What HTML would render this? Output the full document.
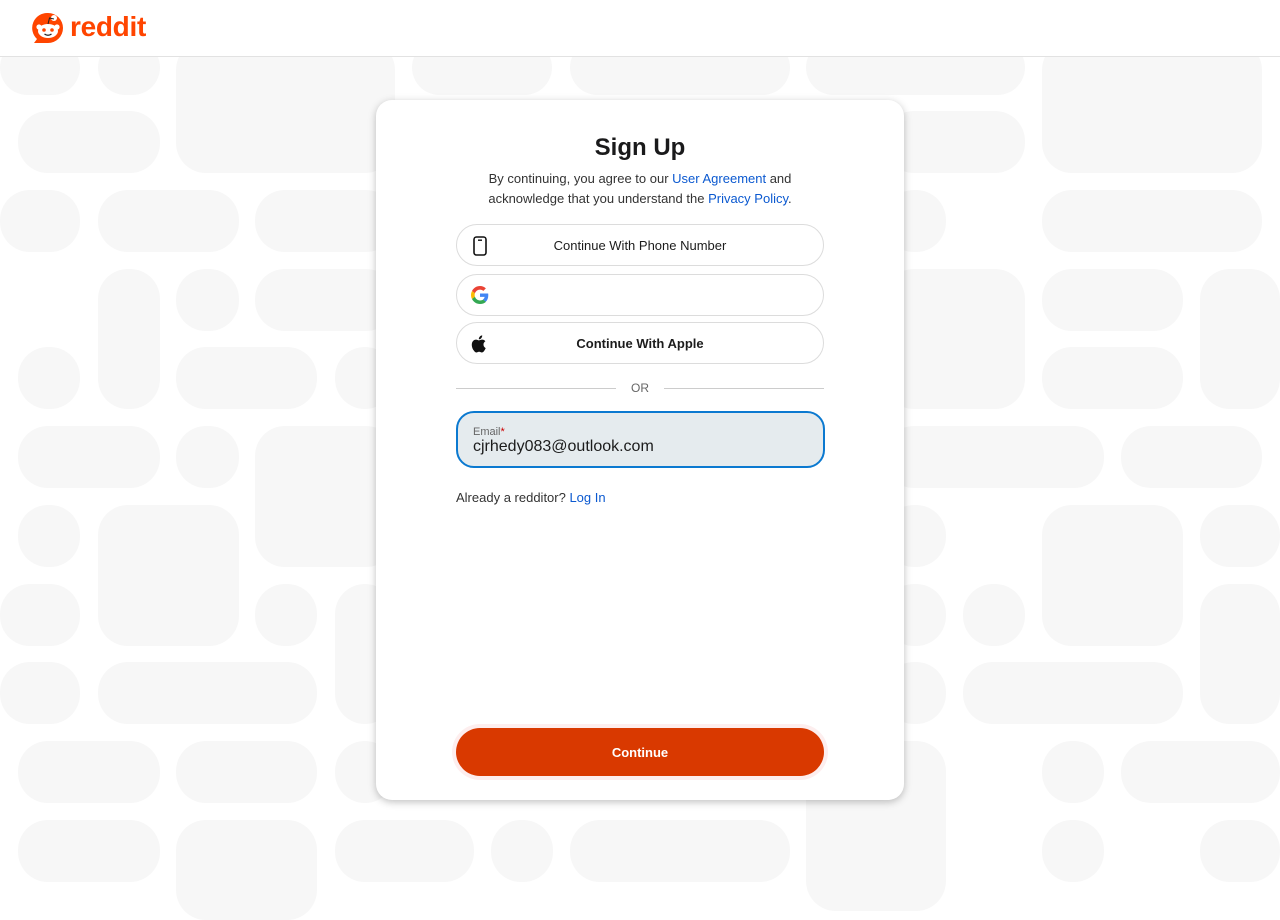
<!DOCTYPE html>
<html><head><meta charset="utf-8"><style>
*{box-sizing:border-box;margin:0;padding:0}
body{width:1280px;height:900px;overflow:hidden;background:#fff;font-family:"Liberation Sans",sans-serif;position:relative;color:#1c1c1c}
.hdr{position:absolute;left:0;top:0;width:1280px;height:57px;background:#fff;border-bottom:1px solid #e2e2e2;z-index:2}
.b{position:absolute;background:#f7f7f7;border-radius:30px}
.card{position:absolute;left:376px;top:100px;width:528px;height:700px;background:#fff;border-radius:16px;box-shadow:0 2px 8px rgba(0,0,0,.25);z-index:3}
h1{position:absolute;top:34px;width:100%;text-align:center;font-size:24px;font-weight:bold;color:#1a1a1b}
.sub{position:absolute;top:69px;width:100%;text-align:center;font-size:13px;line-height:20px;color:#333}
a{color:#0b59d0;text-decoration:none}
.btn{position:absolute;left:80px;width:368px;height:42px;border:1px solid #dcdcdc;border-radius:21px;font-size:13px;display:flex;align-items:center;justify-content:center}
.btn svg{position:absolute;left:14px;top:11px}
.or{position:absolute;top:281px;left:80px;width:368px;height:14px;font-size:12px;color:#666;text-align:center}
.or:before,.or:after{content:"";position:absolute;top:7px;width:160px;height:1px;background:#ccc}
.or:before{left:0}.or:after{right:0}
.inp{position:absolute;left:80px;top:311px;width:369px;height:57px;background:#e5ebee;border:2px solid #0b79d0;border-radius:18px;padding:13px 0 0 15px}
.inp .l{font-size:11px;color:#666}
.inp .v{font-size:16px;color:#1c1c1c;margin-top:0}
.al{position:absolute;left:80px;top:390px;font-size:13px;color:#333}
.cont{position:absolute;left:80px;top:628px;width:368px;height:48px;background:#d93900;border-radius:24px;color:#fff;font-weight:bold;font-size:13px;display:flex;align-items:center;justify-content:center;box-shadow:0 0 0 4px #fdeeee}
</style></head><body>
<div class="hdr">
<svg style="position:absolute;left:32px;top:12px" width="32" height="33" viewBox="0 0 32 33"><path d="M16 1a15 15 0 1 1 0 30H2l3-4A15 15 0 0 1 16 1z" fill="#ff4500"/><ellipse cx="16" cy="19" rx="10" ry="7" fill="#fff"/><circle cx="7" cy="15" r="2.6" fill="#fff"/><circle cx="25" cy="15" r="2.6" fill="#fff"/><circle cx="22" cy="6" r="3" fill="#fff"/><path d="M16 12l1.5-6 4.5 1" stroke="#222" stroke-width="1" fill="none"/><circle cx="12" cy="18" r="1.8" fill="#ff4500"/><circle cx="20" cy="18" r="1.8" fill="#ff4500"/><path d="M12.5 22q3.5 2.5 7 0" stroke="#222" stroke-width="1.3" fill="none"/></svg>
<div style="position:absolute;left:70px;top:11px;font-size:28px;font-weight:bold;color:#ff4500;letter-spacing:-0.3px;line-height:32px">reddit</div>
</div>
<div class="b" style="left:0;top:40px;width:80px;height:55px"></div>
<div class="b" style="left:98px;top:40px;width:62px;height:55px"></div>
<div class="b" style="left:176px;top:40px;width:219px;height:133px"></div>
<div class="b" style="left:412px;top:40px;width:140px;height:55px"></div>
<div class="b" style="left:570px;top:40px;width:220px;height:55px"></div>
<div class="b" style="left:806px;top:40px;width:219px;height:55px"></div>
<div class="b" style="left:1042px;top:40px;width:220px;height:133px"></div>
<div class="b" style="left:18px;top:111px;width:142px;height:62px"></div>
<div class="b" style="left:884px;top:111px;width:141px;height:62px"></div>
<div class="b" style="left:0;top:190px;width:80px;height:62px"></div>
<div class="b" style="left:98px;top:190px;width:141px;height:62px"></div>
<div class="b" style="left:255px;top:190px;width:141px;height:62px"></div>
<div class="b" style="left:884px;top:190px;width:62px;height:62px"></div>
<div class="b" style="left:1042px;top:190px;width:220px;height:62px"></div>
<div class="b" style="left:98px;top:269px;width:62px;height:140px"></div>
<div class="b" style="left:176px;top:269px;width:63px;height:62px"></div>
<div class="b" style="left:255px;top:269px;width:141px;height:62px"></div>
<div class="b" style="left:884px;top:269px;width:141px;height:140px"></div>
<div class="b" style="left:1042px;top:269px;width:141px;height:62px"></div>
<div class="b" style="left:1200px;top:269px;width:80px;height:140px"></div>
<div class="b" style="left:18px;top:347px;width:62px;height:62px"></div>
<div class="b" style="left:176px;top:347px;width:141px;height:62px"></div>
<div class="b" style="left:335px;top:347px;width:60px;height:62px"></div>
<div class="b" style="left:1042px;top:347px;width:141px;height:62px"></div>
<div class="b" style="left:18px;top:426px;width:142px;height:62px"></div>
<div class="b" style="left:176px;top:426px;width:63px;height:62px"></div>
<div class="b" style="left:255px;top:426px;width:141px;height:141px"></div>
<div class="b" style="left:884px;top:426px;width:220px;height:62px"></div>
<div class="b" style="left:1121px;top:426px;width:141px;height:62px"></div>
<div class="b" style="left:18px;top:505px;width:62px;height:62px"></div>
<div class="b" style="left:98px;top:505px;width:141px;height:141px"></div>
<div class="b" style="left:884px;top:505px;width:62px;height:62px"></div>
<div class="b" style="left:1042px;top:505px;width:141px;height:141px"></div>
<div class="b" style="left:1200px;top:505px;width:80px;height:62px"></div>
<div class="b" style="left:0;top:584px;width:80px;height:62px"></div>
<div class="b" style="left:255px;top:584px;width:62px;height:62px"></div>
<div class="b" style="left:335px;top:584px;width:60px;height:140px"></div>
<div class="b" style="left:884px;top:584px;width:62px;height:62px"></div>
<div class="b" style="left:963px;top:584px;width:62px;height:62px"></div>
<div class="b" style="left:1200px;top:584px;width:80px;height:140px"></div>
<div class="b" style="left:0;top:662px;width:80px;height:62px"></div>
<div class="b" style="left:98px;top:662px;width:219px;height:62px"></div>
<div class="b" style="left:884px;top:662px;width:62px;height:62px"></div>
<div class="b" style="left:963px;top:662px;width:220px;height:62px"></div>
<div class="b" style="left:18px;top:741px;width:142px;height:62px"></div>
<div class="b" style="left:176px;top:741px;width:141px;height:62px"></div>
<div class="b" style="left:335px;top:741px;width:60px;height:62px"></div>
<div class="b" style="left:806px;top:741px;width:140px;height:170px"></div>
<div class="b" style="left:1042px;top:741px;width:62px;height:62px"></div>
<div class="b" style="left:1121px;top:741px;width:159px;height:62px"></div>
<div class="b" style="left:18px;top:820px;width:142px;height:62px"></div>
<div class="b" style="left:176px;top:820px;width:141px;height:100px"></div>
<div class="b" style="left:335px;top:820px;width:139px;height:62px"></div>
<div class="b" style="left:491px;top:820px;width:62px;height:62px"></div>
<div class="b" style="left:570px;top:820px;width:220px;height:62px"></div>
<div class="b" style="left:1042px;top:820px;width:62px;height:62px"></div>
<div class="b" style="left:1200px;top:820px;width:80px;height:62px"></div>

<div class="card">
<h1>Sign Up</h1>
<div class="sub">By continuing, you agree to our <a>User Agreement</a> and<br>acknowledge that you understand the <a>Privacy Policy</a>.</div>
<div class="btn" style="top:124px"><svg width="18" height="20" viewBox="0 0 18 20"><rect x="3" y="1" width="12" height="18" rx="2.5" fill="none" stroke="#111" stroke-width="1.6"/><rect x="7" y="3.5" width="4" height="1.4" fill="#111"/></svg>Continue With Phone Number</div>
<div class="btn" style="top:174px"><svg width="18" height="18" viewBox="0 0 48 48" style="top:11px"><path fill="#EA4335" d="M24 9.5c3.5 0 6.6 1.2 9 3.5l6.7-6.7C35.6 2.4 30.2 0 24 0 14.6 0 6.6 5.4 2.7 13.3l7.8 6C12.4 13.7 17.7 9.5 24 9.5z"/><path fill="#4285F4" d="M46.1 24.5c0-1.6-.1-3.1-.4-4.5H24v9h12.4c-.5 2.9-2.2 5.4-4.7 7.1l7.6 5.9c4.4-4.1 6.8-10.1 6.8-17.5z"/><path fill="#FBBC05" d="M10.5 28.7c-.5-1.4-.8-3-.8-4.7s.3-3.2.8-4.7l-7.8-6C1 16.6 0 20.2 0 24s1 7.4 2.7 10.7l7.8-6z"/><path fill="#34A853" d="M24 48c6.5 0 11.9-2.1 15.9-5.8l-7.6-5.9c-2.1 1.4-4.9 2.3-8.3 2.3-6.3 0-11.6-4.2-13.5-9.9l-7.8 6C6.6 42.6 14.6 48 24 48z"/></svg></div>
<div class="btn" style="top:222px;font-weight:bold"><svg width="18" height="20" viewBox="0 0 18 20"><path fill="#111" d="M12.5 10.6c0-2.2 1.8-3.2 1.9-3.3-1-1.5-2.6-1.7-3.2-1.7-1.4-.1-2.6.8-3.3.8-.7 0-1.7-.8-2.800-.8-1.5 0-2.8.8-3.6 2.1-1.5 2.6-.4 6.5 1.1 8.6.7 1 1.6 2.2 2.7 2.2 1.1 0 1.5-.7 2.8-.7s1.7.7 2.8.7c1.2 0 1.9-1 2.6-2.1.8-1.2 1.2-2.4 1.2-2.4s-2.2-.9-2.2-3.4zM10.3 4.1c.6-.7 1-1.7.9-2.7-.9 0-1.9.6-2.5 1.300-.5.6-1 1.6-.9 2.6 1 .1 1.900-.5 2.5-1.2z"/></svg>Continue With Apple</div>
<div class="or">OR</div>
<div class="inp"><div class="l">Email<span style="color:#c00">*</span></div><div class="v">cjrhedy083@outlook.com</div></div>
<div class="al">Already a redditor? <a>Log In</a></div>
<div class="cont">Continue</div>
</div>
</body></html>
